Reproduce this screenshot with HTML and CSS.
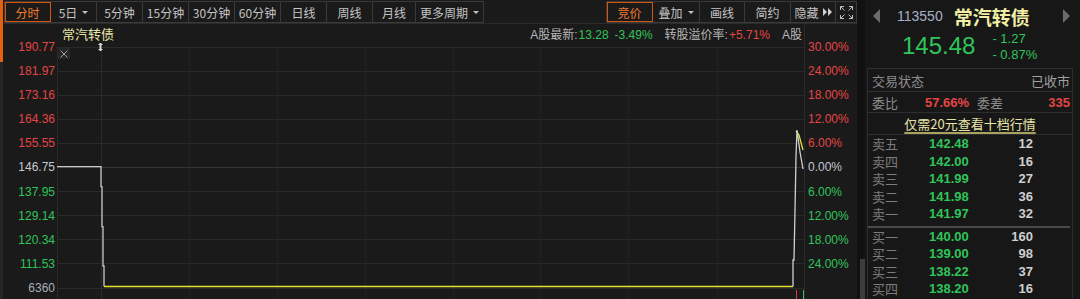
FILE: index.html
```html
<!DOCTYPE html>
<html lang="zh-CN">
<head>
    <meta charset="UTF-8">
    <title>常汽转债 分时</title>
    <link rel="stylesheet" href="styles.css">
</head>
<body>
<div class="app">
    <div class="edge"></div>

    <!-- chart side -->
    <div class="chart-pane">
        <div class="toolbar">
            <div class="tabs">
                <span class="tab active">分时</span>
                <span class="tab">5日<i class="caret"></i></span>
                <span class="tab">5分钟</span>
                <span class="tab">15分钟</span>
                <span class="tab">30分钟</span>
                <span class="tab">60分钟</span>
                <span class="tab">日线</span>
                <span class="tab">周线</span>
                <span class="tab w43">月线</span>
                <span class="tab w68">更多周期<i class="caret"></i></span>
            </div>
            <div class="tabs">
                <span class="tab active">竞价</span>
                <span class="tab w47">叠加<i class="caret"></i></span>
                <span class="tab w45">画线</span>
                <span class="tab">简约</span>
                <span class="tab w45 tight">隐藏<i class="dbl"></i><i class="dbl"></i></span>
                <span class="tab w21"><svg class="icon" width="13" height="13" viewBox="0 0 13 13" fill="none" stroke="#bdbdbd" stroke-width="1"><path d="M0.5 4V0.5H4M0.5 0.5L4.5 4.5M9 0.5H12.5V4M12.5 0.5L8.5 4.5M0.5 9V12.5H4M0.5 12.5L4.5 8.5M12.5 9V12.5H9M12.5 12.5L8.5 8.5"/></svg></span>
            </div>
        </div>

        <div class="chart-body">
            <div class="axis left">
                <span class="up">190.77</span>
                <span class="up">181.97</span>
                <span class="up">173.16</span>
                <span class="up">164.36</span>
                <span class="up">155.55</span>
                <span class="flat">146.75</span>
                <span class="down">137.95</span>
                <span class="down">129.14</span>
                <span class="down">120.34</span>
                <span class="down">111.53</span>
                <span class="vol">6360</span>
            </div>

            <div class="plot">
                <svg width="748" height="275" viewBox="0 0 748 275">
                    <g stroke="#2a2a2a" stroke-width="1">
                        <line x1="0" y1="23.5" x2="748" y2="23.5"/>
                        <line x1="0" y1="47.5" x2="748" y2="47.5"/>
                        <line x1="0" y1="71.5" x2="748" y2="71.5"/>
                        <line x1="0" y1="95.5" x2="748" y2="95.5"/>
                        <line x1="0" y1="119.5" x2="748" y2="119.5"/>
                        <line x1="0" y1="167.5" x2="748" y2="167.5"/>
                        <line x1="0" y1="191.5" x2="748" y2="191.5"/>
                        <line x1="0" y1="215.5" x2="748" y2="215.5"/>
                        <line x1="0" y1="239.5" x2="748" y2="239.5"/>
                        <line x1="0" y1="264.5" x2="748" y2="264.5"/>
                        <line x1="0.5" y1="23" x2="0.5" y2="275"/>
                        <line x1="747.5" y1="0" x2="747.5" y2="275"/>
                        <line x1="44.5" y1="23" x2="44.5" y2="275"/>
                    </g>
                    <g stroke="#252525" stroke-width="1" stroke-dasharray="3 1">
                        <line x1="132.5" y1="23" x2="132.5" y2="275"/>
                        <line x1="220.5" y1="23" x2="220.5" y2="275"/>
                        <line x1="308.5" y1="23" x2="308.5" y2="275"/>
                        <line x1="396.5" y1="23" x2="396.5" y2="275"/>
                        <line x1="483.5" y1="23" x2="483.5" y2="275"/>
                        <line x1="571.5" y1="23" x2="571.5" y2="275"/>
                        <line x1="660.5" y1="23" x2="660.5" y2="275"/>
                    </g>
                    <line x1="0" y1="143.5" x2="748" y2="143.5" stroke="#353535"/>

                    <!-- close box and time marker -->
                    <rect x="1" y="24" width="12" height="11" fill="#262626"/>
                    <path d="M3.5 26.5L10.5 33.5M10.5 26.5L3.5 33.5" stroke="#a0a0a0" stroke-width="1"/>
                    <rect x="42.5" y="19" width="2" height="8" fill="#d8d8d8"/>
                    <path d="M41.5 20.5H45.5M41.5 25.5H45.5" stroke="#d8d8d8" stroke-width="1"/>

                    <!-- price and average -->
                    <polyline fill="none" stroke="#c8c8c8" stroke-width="1.3"
                        points="0,142.7 44,142.7 44,162.7 45,162.7 45,202.7 46,202.7 46,242 47,242 47,262.5"/>
                    <line x1="47" y1="262.5" x2="736" y2="262.5" stroke="#e8e030" stroke-width="1.6"/>
                    <polyline fill="none" stroke="#e8e030" stroke-width="1.3"
                        points="739,107 742,111 746,126"/>
                    <polyline fill="none" stroke="#d0d0d0" stroke-width="1.3"
                        points="736,262.5 736,236 737,236 738,186 739,133 740,106 743,128 746,145"/>
                    <line x1="739.5" y1="266" x2="739.5" y2="275" stroke="#e03838"/>
                    <line x1="746.5" y1="266" x2="746.5" y2="275" stroke="#32c85c"/>
                </svg>

                <div class="info">
                    <span class="title">常汽转债</span>
                    <span class="meta">A股最新:<em class="down">13.28</em><em class="down">-3.49%</em></span>
                    <span class="meta">转股溢价率:<em class="up">+5.71%</em></span>
                    <span class="meta">A股</span>
                </div>
            </div>

            <div class="axis right">
                <span class="up">30.00%</span>
                <span class="up">24.00%</span>
                <span class="up">18.00%</span>
                <span class="up">12.00%</span>
                <span class="up">6.00%</span>
                <span class="flat">0.00%</span>
                <span class="down">6.00%</span>
                <span class="down">12.00%</span>
                <span class="down">18.00%</span>
                <span class="down">24.00%</span>
            </div>
        </div>
    </div>

    <div class="scroll"><div class="thumb"></div></div>

    <!-- quote side -->
    <aside class="quote">
        <div class="q-head">
            <i class="arrow prev"></i>
            <span class="code">113550</span>
            <span class="name">常汽转债</span>
            <i class="arrow next"></i>
        </div>
        <div class="q-price">
            <span class="last">145.48</span>
            <div class="change">
                <span>- 1.27</span>
                <span>- 0.87%</span>
            </div>
        </div>

        <div class="q-box">
            <div class="q-row status">
                <span>交易状态</span>
                <span class="closed">已收市</span>
            </div>
            <div class="q-row ratio">
                <span>委比</span>
                <b class="up">57.66%</b>
                <span>委差</span>
                <b class="up end">335</b>
            </div>
            <div class="q-promo"><span>仅需20元查看十档行情</span></div>

            <div class="book">
                <span class="lbl">卖五</span><b class="down">142.48</b><b class="qty">12</b>
                <span class="lbl">卖四</span><b class="down">142.00</b><b class="qty">16</b>
                <span class="lbl">卖三</span><b class="down">141.99</b><b class="qty">27</b>
                <span class="lbl">卖二</span><b class="down">141.98</b><b class="qty">36</b>
                <span class="lbl">卖一</span><b class="down">141.97</b><b class="qty">32</b>
            </div>
            <div class="book-sep"></div>
            <div class="book">
                <span class="lbl">买一</span><b class="down">140.00</b><b class="qty">160</b>
                <span class="lbl">买二</span><b class="down">139.00</b><b class="qty">98</b>
                <span class="lbl">买三</span><b class="down">138.22</b><b class="qty">37</b>
                <span class="lbl">买四</span><b class="down">138.20</b><b class="qty">16</b>
            </div>
        </div>
    </aside>
</div>
</body>
</html>
```

FILE: styles.css
```css
/* Basic layout */
* {
    box-sizing: border-box;
}
body {
    margin: 0;
    background-color: #171717;
    color: #c4c4c4;
    font-family: "Liberation Sans", "Noto Sans CJK SC", sans-serif;
    font-size: 12px;
}
.app {
    display: flex;
    width: 1080px;
    height: 299px;
    overflow: hidden;
}
.edge {
    width: 3px;
    background: linear-gradient(#e2600e 0 62px, #262626 62px);
}

/* colours shared by both panes */
.up { color: #e44545; }
.down { color: #30c45a; }
.flat { color: #c2c8d0; }

/* Chart pane */
.chart-pane {
    width: 854px;
    display: flex;
    flex-direction: column;
    background-color: #1a1a1a;
}
.toolbar {
    height: 24px;
    display: flex;
    justify-content: space-between;
    padding: 1px 0 0 1px;
    border-bottom: 1px solid #2c2c2c;
}
.tabs {
    display: flex;
    height: 22px;
    border: 1px solid #3a3a3a;
    border-right: none;
}
.tab {
    display: flex;
    align-items: center;
    justify-content: center;
    gap: 5px;
    width: 46px;
    flex-shrink: 0;
    border-right: 1px solid #3a3a3a;
    color: #c4c4c4;
    font-family: "Noto Sans CJK SC", sans-serif;
    font-size: 12px;
    white-space: nowrap;
}
.tab.tight { gap: 1px; }
.tab .icon { flex-shrink: 0; }
.tab.w21 { width: 21px; }
.tab.w43 { width: 43px; }
.tab.w45 { width: 45px; }
.tab.w47 { width: 47px; }
.tab.w68 { width: 68px; }
.tab.active {
    color: #f07a2c;
    outline: 1px solid #d4560e;
    outline-offset: -1px;
}
.caret {
    width: 0;
    height: 0;
    border-left: 3px solid transparent;
    border-right: 3px solid transparent;
    border-top: 3px solid #c4c4c4;
}
.dbl {
    flex-shrink: 0;
    width: 0;
    height: 0;
    border-top: 4px solid transparent;
    border-bottom: 4px solid transparent;
    border-left: 4px solid #d0d0d0;
}
.dbl:first-of-type {
    margin-left: 3px;
}

.chart-body {
    flex: 1;
    display: flex;
}
.axis {
    display: flex;
    flex-direction: column;
    padding-top: 11px;
}
.axis span {
    height: 24.1px;
    line-height: 24px;
}
.axis.left {
    width: 54px;
    padding-right: 2px;
    text-align: right;
}
.axis.right {
    width: 52px;
    padding-left: 3px;
}
.axis .vol { color: #a8b0b8; }

.plot {
    position: relative;
    width: 748px;
}
.plot svg {
    display: block;
}
.info {
    position: absolute;
    top: 0;
    left: 0;
    right: 0;
    height: 19px;
    display: flex;
    align-items: center;
    gap: 12px;
    padding: 0 3px 0 5px;
    color: #b8b8b8;
}
.info .title {
    margin-right: auto;
    color: #e6e6a6;
    font-family: "Noto Sans CJK SC", sans-serif;
    font-size: 13px;
}
.info em {
    font-style: normal;
    margin-left: 1px;
}
.info .meta em + em {
    margin-left: 6px;
}

.scroll {
    width: 8px;
    display: flex;
    flex-direction: column;
    justify-content: flex-end;
    padding-left: 3px;
    background-color: #111;
}
.thumb {
    height: 40px;
    background-color: #3c3c3c;
}

/* Quote pane */
.quote {
    width: 215px;
    background-color: #171717;
    font-family: "Noto Sans CJK SC", sans-serif;
    font-size: 13px;
}
.q-head {
    height: 32px;
    display: flex;
    align-items: center;
}
.arrow {
    width: 0;
    height: 0;
    border-top: 7px solid transparent;
    border-bottom: 7px solid transparent;
}
.arrow.prev {
    margin-left: 8px;
    border-right: 7px solid #6a6a6a;
}
.arrow.next {
    margin-left: auto;
    margin-right: 10px;
    border-left: 7px solid #6a6a6a;
}
.code {
    margin-left: 17px;
    color: #a8b0c4;
    font-family: "Liberation Sans", sans-serif;
    font-size: 14px;
}
.name {
    margin-left: 11px;
    color: #f2eea4;
    font-size: 19px;
    font-weight: bold;
}
.q-price {
    height: 36px;
    display: flex;
    align-items: flex-start;
    color: #30c45a;
    font-family: "Liberation Sans", sans-serif;
}
.last {
    margin: 2px 0 0 37px;
    font-size: 24px;
    line-height: 24px;
}
.change {
    display: flex;
    flex-direction: column;
    margin: -1px 0 0 17px;
    font-size: 13px;
    line-height: 16px;
}

.q-box {
    margin-left: 2px;
    width: 206px;
    border-left: 1px solid #2e2e2e;
    border-right: 1px solid #2e2e2e;
    border-top: 1px solid #2e2e2e;
    color: #8c8c8c;
}
.q-row {
    display: flex;
    align-items: center;
    padding: 0 2px 0 4px;
    border-bottom: 1px solid #2e2e2e;
}
.q-row.status {
    height: 23px;
    justify-content: space-between;
}
.q-row .closed { color: #a0a0a0; }
.q-row.ratio {
    height: 21px;
    display: grid;
    grid-template-columns: 53px 52px 1fr auto;
}
.q-row b {
    font-family: "Liberation Sans", sans-serif;
    font-size: 13px;
}
.q-promo {
    height: 22px;
    display: flex;
    align-items: center;
    justify-content: center;
    border-bottom: 1px solid #2e2e2e;
    color: #e8e4a8;
}
.q-promo span {
    text-decoration: underline;
    text-decoration-color: #a8a460;
    text-decoration-thickness: 2px;
    text-underline-offset: 3px;
}

.book {
    display: grid;
    grid-template-columns: 57px 60px 44px;
    grid-auto-rows: 17.5px;
    align-items: center;
    padding-left: 4px;
}
.book .lbl { color: #7c7c7c; }
.book b {
    font-family: "Liberation Sans", sans-serif;
    font-size: 13px;
}
.book .qty {
    text-align: right;
    color: #cfcfcf;
}
.book-sep {
    height: 2px;
    margin: 3px 2px 0 0;
    background-color: #4a4a4a;
}
```
